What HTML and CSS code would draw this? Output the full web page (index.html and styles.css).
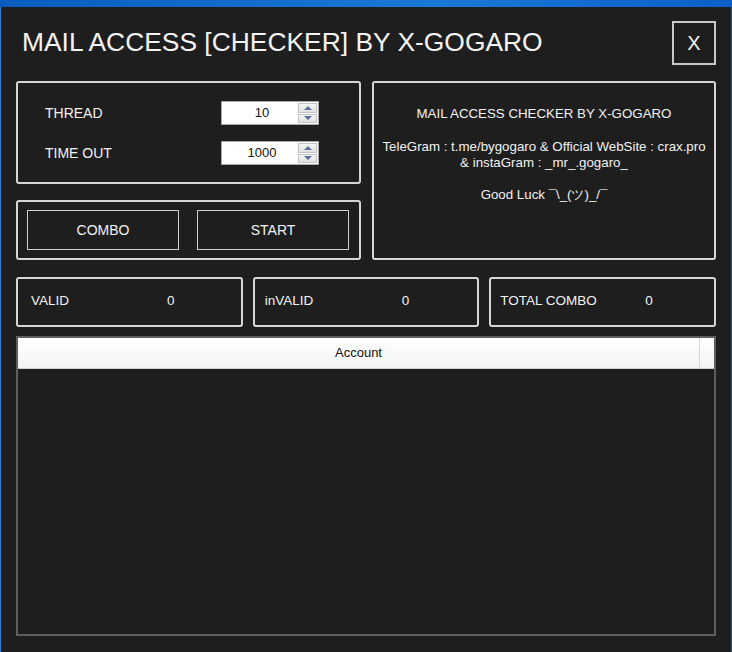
FILE: index.html
```html
<!DOCTYPE html>
<html lang="en">
<head>
    <meta charset="UTF-8">
    <meta name="viewport" content="width=device-width, initial-scale=1.0">
    <title>MAIL ACCESS [CHECKER] BY X-GOGARO</title>
    <link rel="stylesheet" href="styles.css">
</head>
<body>

<div class="window">
    <div class="titlebar">
        <h1>MAIL ACCESS [CHECKER] BY X-GOGARO</h1>
        <button class="close-btn">X</button>
    </div>

    <div class="top">
        <div class="left-col">
            <div class="panel settings">
                <label>THREAD</label>
                <div class="spin">
                    <span class="spin-value">10</span>
                    <div class="spin-arrows">
                        <span class="arrow up"></span>
                        <span class="arrow down"></span>
                    </div>
                </div>
                <label>TIME OUT</label>
                <div class="spin">
                    <span class="spin-value">1000</span>
                    <div class="spin-arrows">
                        <span class="arrow up"></span>
                        <span class="arrow down"></span>
                    </div>
                </div>
            </div>

            <div class="panel actions">
                <button class="action-btn">COMBO</button>
                <button class="action-btn">START</button>
            </div>
        </div>

        <div class="panel info">
            <p class="info-title">MAIL ACCESS CHECKER BY X-GOGARO</p>
            <p class="info-links">TeleGram : t.me/bygogaro &amp; Official WebSite : crax.pro<br>&amp; instaGram : _mr_.gogaro_</p>
            <p class="info-luck">Good Luck ¯\_(ツ)_/¯</p>
        </div>
    </div>

    <div class="stats">
        <div class="panel stat stat-valid"><span class="stat-label">VALID</span><span class="stat-value">0</span></div>
        <div class="panel stat stat-invalid"><span class="stat-label">inVALID</span><span class="stat-value">0</span></div>
        <div class="panel stat stat-total"><span class="stat-label">TOTAL COMBO</span><span class="stat-value">0</span></div>
    </div>

    <div class="grid">
        <div class="grid-header">
            <div class="col-account">Account</div>
            <div class="col-filler"></div>
        </div>
        <div class="grid-body"></div>
    </div>
</div>

</body>
</html>
```

FILE: styles.css
```css
html, body {
    margin: 0;
    padding: 0;
    height: 100%;
}
body {
    background: linear-gradient(90deg, #0a5cc0, #1a78d8 60%, #0d5fc6);
    font-family: "Liberation Sans", Arial, sans-serif;
    color: #f2f2f2;
    overflow: hidden;
}

.window {
    margin-top: 7px;
    height: 645px;
    box-sizing: border-box;
    background: #1e1e1e;
    border-left: 1px solid #2a7fd8;
    padding: 0 15px 0 15px;
    margin-right: 1px;
}

.titlebar {
    display: flex;
    justify-content: space-between;
    align-items: flex-start;
    padding-top: 14px;
    height: 74px;
    box-sizing: border-box;
}
.titlebar h1 {
    margin: 0;
    padding-left: 6px;
    font-weight: normal;
    font-size: 26.4px;
    line-height: 43px;
    color: #f4f4f4;
}
.close-btn {
    width: 44px;
    height: 44px;
    background: #1e1e1e;
    border: 2px solid #c8c8c8;
    color: #f2f2f2;
    font-family: "Liberation Sans", Arial, sans-serif;
    font-size: 20px;
    padding: 0;
}

.panel {
    border: 2px solid #d6d6d6;
    border-radius: 3px;
    box-sizing: border-box;
}

.top {
    display: grid;
    grid-template-columns: 345px 344px;
    gap: 11px;
}
.left-col {
    display: flex;
    flex-direction: column;
    gap: 16px;
}

.settings {
    height: 103px;
    display: grid;
    grid-template-columns: 176px 98px;
    row-gap: 16px;
    align-items: center;
    align-content: start;
    padding: 18px 0 0 27px;
}
.settings label {
    font-size: 14px;
}

.spin {
    height: 24px;
    background: #fff;
    border: 1px solid #a8a8a8;
    box-sizing: border-box;
    display: flex;
    align-items: stretch;
}
.spin-value {
    flex: 1;
    text-align: center;
    color: #111;
    font-size: 13px;
    line-height: 22px;
    padding-left: 4px;
}
.spin-arrows {
    width: 19px;
    display: flex;
    flex-direction: column;
    gap: 1px;
    padding: 1px 1px 1px 0;
}
.arrow {
    flex: 1;
    background: linear-gradient(#f4f4f4, #e2e2e2);
    border: 1px solid #c2c2c2;
    position: relative;
}
.arrow::after {
    content: "";
    position: absolute;
    left: 50%;
    top: 50%;
    margin-left: -4px;
    border-left: 4px solid transparent;
    border-right: 4px solid transparent;
}
.arrow.up::after {
    margin-top: -2px;
    border-bottom: 4px solid #5b6fa6;
}
.arrow.down::after {
    margin-top: -2px;
    border-top: 4px solid #5b6fa6;
}

.actions {
    height: 60px;
    display: flex;
    gap: 18px;
    padding: 8px 10px 8px 9px;
}
.action-btn {
    flex: 1;
    background: #1e1e1e;
    border: 1px solid #cfcfcf;
    color: #f2f2f2;
    font-family: "Liberation Sans", Arial, sans-serif;
    font-size: 14px;
    padding: 0;
}

.info {
    height: 179px;
    text-align: center;
    padding-top: 23px;
    font-size: 13.3px;
}
.info p {
    margin: 0;
    line-height: 16px;
}
.info .info-links {
    margin-top: 17px;
}
.info .info-luck {
    margin-top: 16px;
}

.stats {
    display: grid;
    grid-template-columns: 1fr 1fr 1fr;
    gap: 10px;
    margin-top: 17px;
}
.stat {
    height: 50px;
    display: flex;
    align-items: center;
    padding-bottom: 3px;
    font-size: 13.5px;
}
.stat-valid { padding-left: 13px; }
.stat-valid .stat-label { width: 136px; }
.stat-invalid { padding-left: 10px; }
.stat-invalid .stat-label { width: 137px; }
.stat-total { padding-left: 9px; }
.stat-total .stat-label { width: 145px; }

.grid {
    margin-top: 9px;
    height: 300px;
    border: 2px solid #5e5e5e;
    box-sizing: border-box;
    display: flex;
    flex-direction: column;
}
.grid-header {
    height: 30px;
    display: flex;
    background: linear-gradient(#ffffff, #f1f2f4);
    border-bottom: 1px solid #d0d0d0;
    color: #111;
    font-size: 13px;
}
.col-account {
    flex: 1;
    text-align: center;
    line-height: 30px;
    border-right: 1px solid #d8d8d8;
}
.col-filler {
    width: 14px;
}
.grid-body {
    flex: 1;
    background: #1e1e1e;
}
```
